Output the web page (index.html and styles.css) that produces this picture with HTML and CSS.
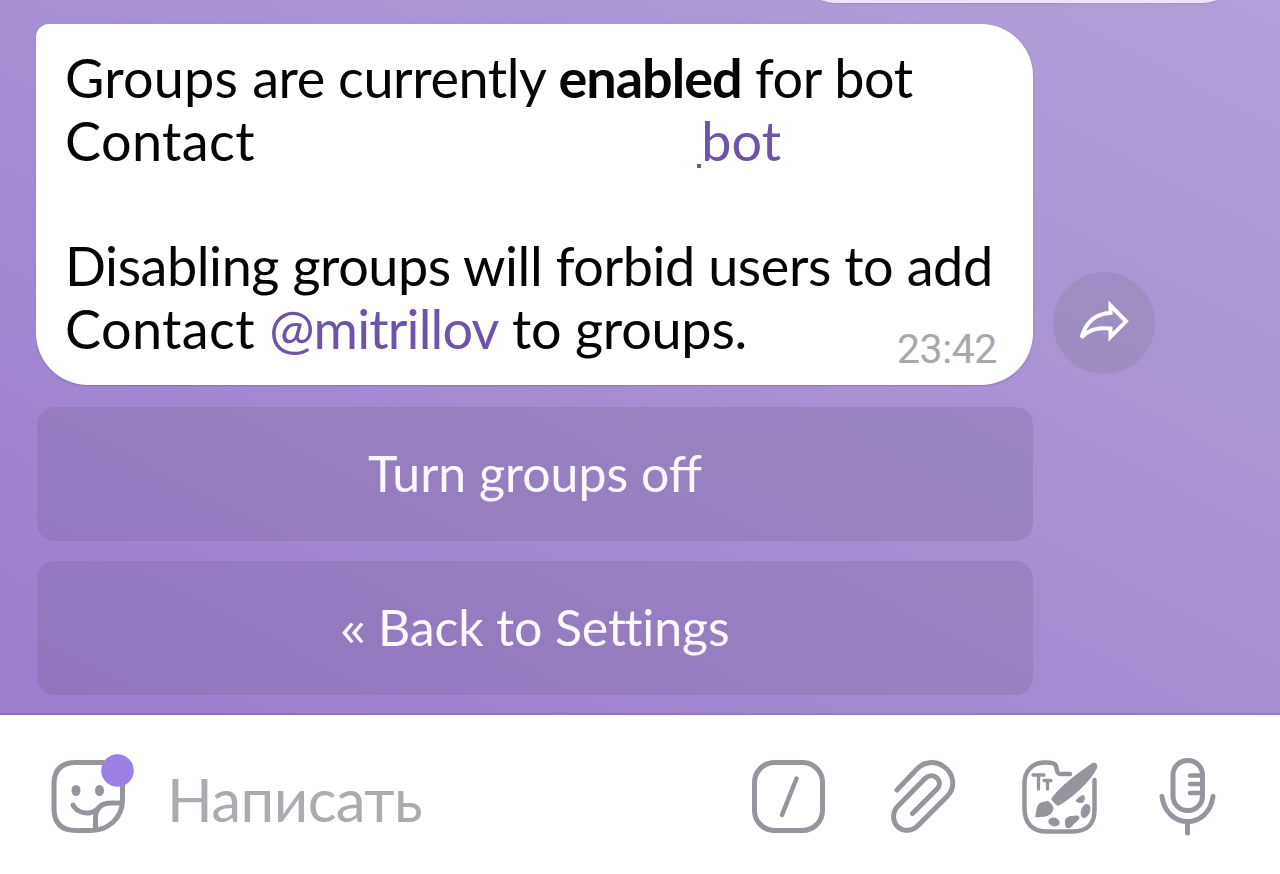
FILE: index.html
```html
<!DOCTYPE html>
<html lang="ru">
  <head>
    <meta charset="utf-8" />
    <meta name="viewport" content="width=device-width, initial-scale=1.0" />
    <title>Chat</title>
    <link rel="stylesheet" href="styles.css">
  </head>
  <body>
    <main class="chat">
      <div class="previous"></div>
      <div class="message-row">
        <div class="bubble">
          <p class="line line-groups"><span class="first">Groups </span>are currently <b>enabled</b> for bot</p>
          <p class="line line-contact"><span class="word">Contact </span><a class="bot-link"><i class="dot"></i>bot</a></p>
          <p class="line line-empty"></p>
          <p class="line line-disabling">Disabling groups will forbid users to add</p>
          <p class="line line-last"><span class="word">Contact </span><a class="user-link">@mitrillov</a> to groups.</p>
          <time class="time">23:42</time>
        </div>
        <div class="share">
          <svg width="102" height="102" viewBox="0 0 102 102" fill="none" stroke="#fff" stroke-width="4" stroke-linejoin="miter">
            <path d="M28.500 65.500C33 50 43 41.500 57.500 41V33.500L73 49.300L57.500 65V56.500C44 55.500 36 57.500 28.500 65.500Z" />
          </svg>
        </div>
      </div>
      <div class="keyboard">
        <div class="key key-off">Turn groups off</div>
        <div class="key key-back"><span class="arrow">«</span> Back to Se<span class="tt">t</span>tings</div>
      </div>
    </main>
    <footer class="composer">
      <svg class="sticker" width="90" height="90" viewBox="45 750 90 90" fill="none" stroke="#96959d" stroke-width="5" stroke-linecap="round">
        <path d="M103 762.500H76Q54 762.500 54 784.500V808.500Q54 830.500 76 830.500H91C108 830.500 122.500 818 122.500 800V782" />
        <path d="M73 805C77 813 89 816 98 809" />
        <path d="M95.500 829V818C95.500 807 102 803 112 803H121" />
        <ellipse cx="76" cy="790.500" rx="4.500" ry="5.500" fill="#96959d" stroke="none" />
        <ellipse cx="99.500" cy="790.500" rx="4.500" ry="5.500" fill="#96959d" stroke="none" />
        <circle cx="117.500" cy="770.500" r="16.300" fill="#9c80e4" stroke="none" />
      </svg>
      <span class="placeholder">Написать</span>
      <svg class="command" width="80" height="80" viewBox="748 757 80 80" fill="none" stroke="#96959d" stroke-width="5" stroke-linecap="round">
        <rect x="754.500" y="762.500" width="68" height="68" rx="20" />
        <path d="M796.500 778.500L782 815" stroke-width="4.500" />
      </svg>
      <svg class="clip" width="80" height="80" viewBox="883 757 80 80" fill="none" stroke="#96959d" stroke-width="5" stroke-linecap="round">
        <path d="M897 790L916.500 769.500C923 762 935 760 943 766C954 773 956 787 947.500 796L918 825.500C912 831.500 903 832 897.500 826.500C892 821 892.500 811.500 898 806L924 779.500C929 774.500 934 775 937 778C940.500 781.500 940 786 936.500 789.500L912.500 813.500" />
      </svg>
      <svg class="palette" width="84" height="84" viewBox="1017 755 84 84" fill="none" stroke="#96959d" stroke-width="4.500" stroke-linecap="round">
        <path d="M1070 774H1061C1056 774 1057 769 1056 766C1055 763 1051 762.500 1047 762.500H1044C1032 763 1024.500 771 1024.500 783V808C1024.500 823 1032 831.500 1047 831.500H1073C1087 831.500 1094.500 824 1094.500 810V780" />
        <path d="M1033 775H1044M1038.500 775V789M1044 780.500H1051M1047.500 780.500V789" stroke-width="3.300" />
        <g fill="#96959d" stroke="none">
          <path d="M1091 764C1095 761 1099 764 1096.500 769C1091 781 1071 799 1058 806C1055 804 1053 802 1051 799C1062 784 1077 774 1091 764Z" />
          <path d="M1048 801C1051 803 1053 805 1053.500 808C1053 816 1044 818 1035 817C1037 813 1035 803 1043 802Z" />
          <path d="M1076 800C1078 797 1082 795 1084 795C1086 799 1084 803 1081 803C1078 803 1075 802 1076 800Z" />
          <ellipse cx="1085.500" cy="811" rx="4.500" ry="7.200" transform="rotate(20 1085.500 811)" />
          <path d="M1065 824C1064 818 1068 816 1072 816C1076 815 1081 815 1079 819C1078 821 1075 823 1073 825C1070 830 1065 829 1065 824Z" />
          <ellipse cx="1054" cy="822" rx="5.800" ry="4.300" transform="rotate(12 1054 822)" />
        </g>
      </svg>
      <svg class="mic" width="66" height="86" viewBox="1155 753 66 86" fill="none" stroke="#96959d" stroke-width="5" stroke-linecap="round">
        <rect x="1173" y="760.500" width="29.500" height="50" rx="14.500" />
        <path d="M1162 796.500C1164 812 1175 821.500 1187.500 821.500S1211 812 1213 796.500M1187.500 822V833" />
        <path d="M1190 775.500H1200M1190 784H1200M1190 793H1200" stroke-width="4.500" />
      </svg>
    </footer>
  </body>
</html>
```
FILE: styles.css
```css
* {
box-sizing: border-box;
margin: 0;
padding: 0;
}
body {
height: 874px;
overflow: hidden;
font-family: Lato, "Noto Sans", sans-serif;
background: #fff;
}
.chat {
height: 715px;
padding-left: 36px;
overflow: hidden;
background: linear-gradient(28deg, #9b7dcd 0%, #a389d2 35%, #aa94d4 65%, #b09fd8 100%);
box-shadow: inset 0 -5px 2px -4px rgba(80, 60, 120, 0.4);
}
.previous {
width: 432px;
height: 63px;
margin: -60px 0 0 767px;
border-radius: 52px;
background: #f0e4fc;
box-shadow: 0 1px 1px rgba(90, 65, 140, 0.15);
}
.message-row {
display: flex;
align-items: flex-end;
gap: 20px;
margin-top: 21px;
}
.bubble {
position: relative;
width: 997px;
height: 361px;
padding: 23px 29px 0;
border-radius: 13px 52px 52px 52px;
background: #fff;
box-shadow: 0 1px 2px rgba(90, 65, 140, 0.35);
color: #050505;
}
.line {
height: 62.8px;
font-size: 54px;
line-height: 62.8px;
white-space: nowrap;
}
.line-groups {
letter-spacing: -0.45px;
}
.line-groups b {
letter-spacing: -1px;
}
.first {
letter-spacing: 0.2px;
}
.line-disabling {
letter-spacing: -0.43px;
}
.line-last {
letter-spacing: -0.25px;
}
.word {
letter-spacing: 0.4px;
}
.bubble a {
color: #6f52ab;
}
.line-last .user-link {
letter-spacing: -0.85px;
}
.bot-link {
display: inline-block;
position: relative;
margin-left: 432px;
}
.dot {
position: absolute;
left: -4px;
bottom: 5px;
width: 4px;
height: 4px;
background: #6f52ab;
}
.time {
position: absolute;
right: 36px;
bottom: 12px;
font: 41px/48px Roboto, sans-serif;
letter-spacing: -0.4px;
color: #a9a8ad;
}
.share {
width: 102px;
height: 102px;
margin-bottom: 11px;
border-radius: 50%;
background: rgba(112, 108, 130, 0.2);
}
.share svg {
display: block;
}
.keyboard {
display: flex;
flex-direction: column;
gap: 20px;
width: 996px;
margin: 22px 0 0 1px;
}
.key {
height: 134px;
border-radius: 18px;
background: rgba(88, 80, 115, 0.17);
color: #fbf8ff;
font-size: 50px;
line-height: 132px;
text-align: center;
}
.key-back {
font-variant-ligatures: none;
letter-spacing: -0.1px;
}
.arrow {
font-family: "Open Sans", sans-serif;
line-height: 1;
}
.tt {
letter-spacing: -1.5px;
}
.composer {
display: flex;
align-items: center;
height: 159px;
padding: 0 56px 0 45px;
background: #fff;
}
.placeholder {
width: 581px;
margin: 8px 0 0 32px;
font-size: 60px;
line-height: 72px;
letter-spacing: -0.6px;
color: #acabb1;
white-space: nowrap;
}
.composer svg {
flex: none;
}
.composer .command {
margin-top: 5px;
}
.composer .clip {
margin: 5px 0 0 55px;
}
.composer .palette {
margin: 5px 0 0 54px;
}
.composer .mic {
margin: 3px 0 0 54px;
}
```
